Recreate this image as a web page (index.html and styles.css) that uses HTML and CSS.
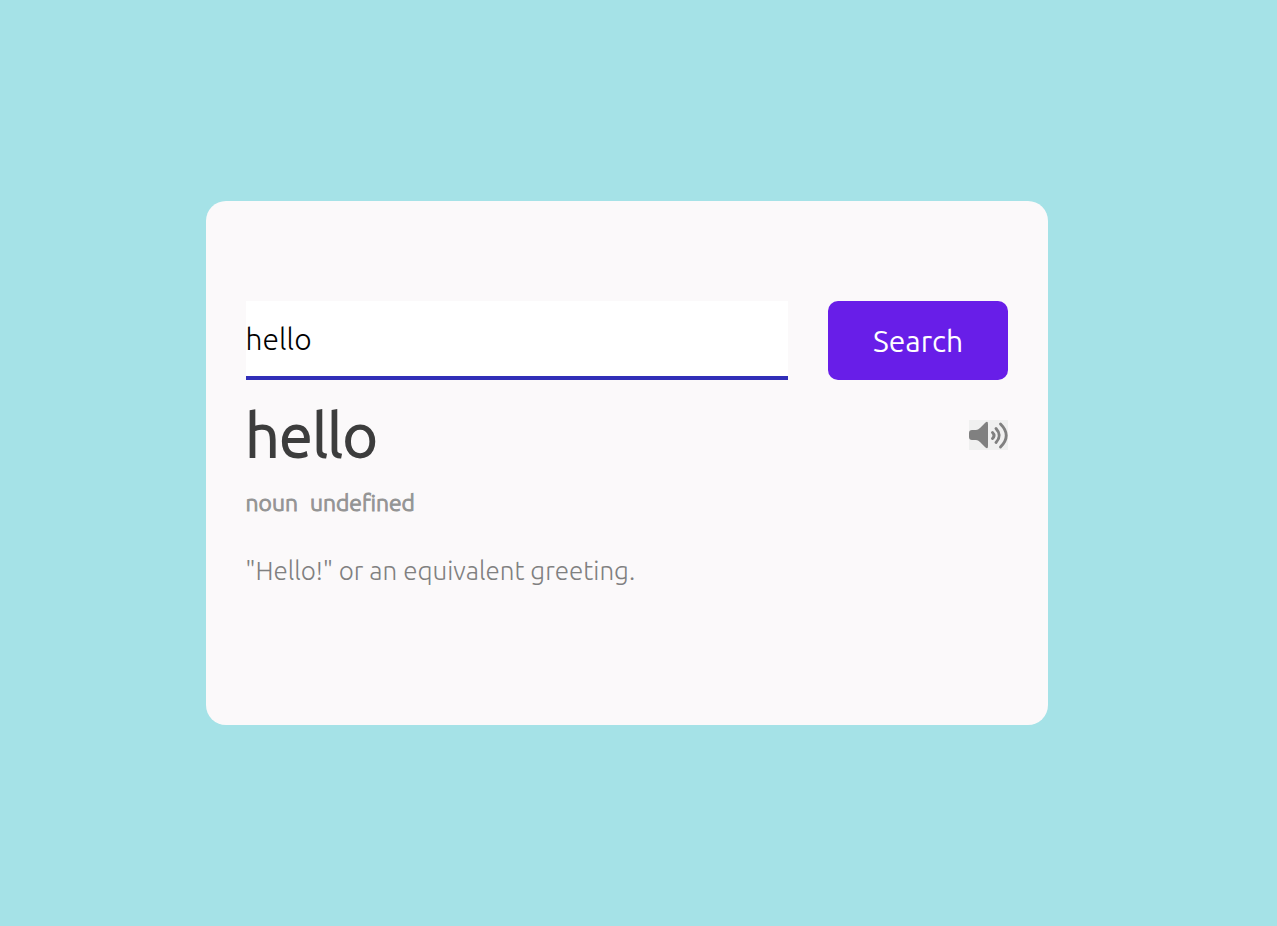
FILE: index.html
```
<!DOCTYPE html>
<html lang="en">
<head>
<meta charset="utf-8">
<meta name="viewport" content="width=device-width, initial-scale=1">
<title>Dictionary</title>
<link rel="stylesheet" href="styles.css">
</head>
<body>
<main class="card">
  <form class="search">
    <input class="search-input" type="text" value="hello" aria-label="Word">
    <button class="search-button" type="submit">Search</button>
  </form>
  <section class="result">
    <div class="word">
      <h1 class="word-title">hello</h1>
      <button class="sound" type="button" aria-label="Play pronunciation">
        <svg class="sound-icon" viewBox="0 0 39 30" aria-hidden="true">
          <path fill="#808080" d="M3 10h4q2 0 4-2l5-5q3-3 3 1v22q0 4-3 1l-5-5q-2-2-4-2H3q-3 0-3-3v-4q0-3 3-3z"/>
          <g fill="none" stroke="#808080" stroke-width="2.9" stroke-linecap="round">
            <path d="M23.500 12.500q3 3 0 6"/>
            <path d="M27 8.500Q33.500 15.500 27 22.500"/>
            <path d="M31.500 4Q43 15.500 31.500 27"/>
          </g>
        </svg>
      </button>
    </div>
    <div class="details"><p>noun</p><p>undefined</p></div>
    <p class="meaning">"Hello!" or an equivalent greeting.</p>
  </section>
</main>
</body>
</html>
```
FILE: styles.css
```
* {
  box-sizing: border-box;
  margin: 0;
  padding: 0;
  font-family: Ubuntu, Lato, sans-serif;
}

body {
  display: flex;
  align-items: center;
  justify-content: center;
  min-height: 100vh;
  padding-right: 23px;
  background: #a5e2e7;
}

.card {
  width: 66vw;
  padding: 100px 40px;
  border-radius: 20px;
  background: #fbf9fa;
}

.search {
  display: flex;
  gap: 40px;
}

.search-input {
  flex: 3;
  min-width: 0;
  height: 79px;
  border: 0;
  border-bottom: 4px solid #312eb8;
  background: #fff;
  color: #000;
  font-size: 30px;
  font-weight: 300;
  outline: 0;
}

.search-button {
  flex: 1;
  border: 0;
  border-radius: 10px;
  background: #681ee8;
  color: #fff;
  font-size: 30px;
}

.word {
  display: flex;
  align-items: center;
  justify-content: space-between;
  padding-top: 14px;
}

.word-title {
  color: #3d3d3d;
  font-size: 60px;
  font-weight: 300;
  line-height: 82px;
  -webkit-text-stroke: 2px #3d3d3d;
}

.sound {
  border: 0;
  background: #f0f0f0;
}

.sound-icon {
  display: block;
  width: 39px;
  height: 30px;
}

.details {
  display: flex;
  gap: 12px;
  padding: 10px 0 12px;
  color: #949494;
  font-size: 23px;
  font-weight: 300;
  line-height: 34px;
  -webkit-text-stroke: 1px #949494;
}

.meaning {
  padding: 22px 0 37px;
  color: #808080;
  font-size: 26px;
  font-weight: 300;
  line-height: 34px;
}
```
